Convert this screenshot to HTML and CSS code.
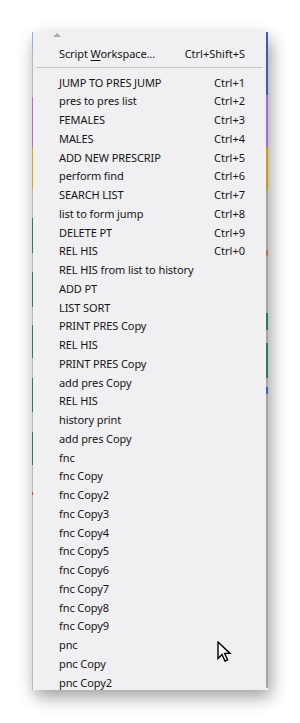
FILE: index.html
```html
<!DOCTYPE html>
<html>
<head>
<meta charset="utf-8">
<link rel="stylesheet" href="styles.css">
</head>
<body>
<div class="stage">
  <div class="menu">
    <div class="edge edge-left"></div>
    <div class="body">
      <div class="scroll-up"><span class="tri"></span></div>
      <div class="item"><span class="label">Script <u>W</u>orkspace...</span><span class="key">Ctrl+Shift+S</span></div>
      <div class="sep"></div>
      <div class="item"><span class="label">JUMP TO PRES JUMP</span><span class="key">Ctrl+1</span></div>
      <div class="item"><span class="label">pres to pres list</span><span class="key">Ctrl+2</span></div>
      <div class="item"><span class="label">FEMALES</span><span class="key">Ctrl+3</span></div>
      <div class="item"><span class="label">MALES</span><span class="key">Ctrl+4</span></div>
      <div class="item"><span class="label">ADD NEW PRESCRIP</span><span class="key">Ctrl+5</span></div>
      <div class="item"><span class="label">perform find</span><span class="key">Ctrl+6</span></div>
      <div class="item"><span class="label">SEARCH LIST</span><span class="key">Ctrl+7</span></div>
      <div class="item"><span class="label">list to form jump</span><span class="key">Ctrl+8</span></div>
      <div class="item"><span class="label">DELETE PT</span><span class="key">Ctrl+9</span></div>
      <div class="item"><span class="label">REL HIS</span><span class="key">Ctrl+0</span></div>
      <div class="item"><span class="label">REL HIS from list to history</span></div>
      <div class="item"><span class="label">ADD PT</span></div>
      <div class="item"><span class="label">LIST SORT</span></div>
      <div class="item"><span class="label">PRINT PRES Copy</span></div>
      <div class="item"><span class="label">REL HIS</span></div>
      <div class="item"><span class="label">PRINT PRES Copy</span></div>
      <div class="item"><span class="label">add pres Copy</span></div>
      <div class="item"><span class="label">REL HIS</span></div>
      <div class="item"><span class="label">history print</span></div>
      <div class="item"><span class="label">add pres Copy</span></div>
      <div class="item"><span class="label">fnc</span></div>
      <div class="item"><span class="label">fnc Copy</span></div>
      <div class="item"><span class="label">fnc Copy2</span></div>
      <div class="item"><span class="label">fnc Copy3</span></div>
      <div class="item"><span class="label">fnc Copy4</span></div>
      <div class="item"><span class="label">fnc Copy5</span></div>
      <div class="item"><span class="label">fnc Copy6</span></div>
      <div class="item"><span class="label">fnc Copy7</span></div>
      <div class="item"><span class="label">fnc Copy8</span></div>
      <div class="item"><span class="label">fnc Copy9</span></div>
      <div class="item"><span class="label">pnc</span></div>
      <div class="item"><span class="label">pnc Copy</span></div>
      <div class="item"><span class="label">pnc Copy2</span></div>
    </div>
    <div class="edge edge-right"></div>
  </div>
  <svg class="cursor" width="15" height="22" viewBox="0 0 15 22">
    <path d="M1 1 L1 17.5 L5 13.5 L8 20 L10.6 18.8 L7.6 12.4 L13 12.4 Z" fill="#fff" stroke="#000" stroke-width="1.4" stroke-linejoin="miter"/>
  </svg>
</div>
</body>
</html>
```

FILE: styles.css
```css
html, body {
  margin: 0;
  padding: 0;
  background: #ffffff;
}

.stage {
  position: relative;
  width: 300px;
  height: 723px;
  padding: 32px 0 0 32px;
  box-sizing: border-box;
}

.menu {
  display: flex;
  width: 236px;
  height: 658px;
  background: #f0eff1;
  box-shadow: 3px 7px 16px rgba(0, 0, 0, 0.38);
  overflow: hidden;
  font-family: "Noto Sans", "Open Sans", sans-serif;
  font-size: 11px;
  color: #151515;
}

.edge-left {
  width: 1px;
  flex: none;
  background: linear-gradient(to bottom,
    #8fb0d8 0, #8fb0d8 18px,
    #b9b9b9 18px, #b9b9b9 65px,
    #b46ad0 65px, #b46ad0 115px,
    #d9a613 115px, #d9a613 158px,
    #b9b9b9 158px, #b9b9b9 186px,
    #2d7a5a 186px, #2d7a5a 221px,
    #b9b9b9 221px, #b9b9b9 240px,
    #2d7a5a 240px, #2d7a5a 275px,
    #b9b9b9 275px, #b9b9b9 293px,
    #2d7a5a 293px, #2d7a5a 326px,
    #b9b9b9 326px, #b9b9b9 346px,
    #2d7a5a 346px, #2d7a5a 380px,
    #b9b9b9 380px, #b9b9b9 400px,
    #2d7a5a 400px, #2d7a5a 433px,
    #b9b9b9 433px, #b9b9b9 460px,
    #d94040 460px, #d94040 463px,
    #b9b9b9 463px, #b9b9b9 100%);
}

.edge-right {
  width: 2px;
  flex: none;
  margin-left: 1px;
  margin-bottom: 2px;
  background: linear-gradient(to bottom,
    #3c5ea8 0, #3c5ea8 63px,
    #a86ad0 63px, #a86ad0 115px,
    #c79a14 115px, #c79a14 158px,
    #a6a6a6 158px, #a6a6a6 218px,
    #b4784a 218px, #b4784a 224px,
    #a6a6a6 224px, #a6a6a6 281px,
    #2d7a5a 281px, #2d7a5a 298px,
    #a6a6a6 298px, #a6a6a6 311px,
    #2d7a5a 311px, #2d7a5a 346px,
    #a6a6a6 346px, #a6a6a6 355px,
    #3a66b0 355px, #3a66b0 362px,
    #a6a6a6 362px, #a6a6a6 100%);
}

.body {
  flex: 1;
  display: flex;
  flex-direction: column;
  min-width: 0;
}

.scroll-up {
  height: 12.5px;
  flex: none;
  position: relative;
}

.tri {
  position: absolute;
  left: 20px;
  top: 1px;
  width: 0;
  height: 0;
  border-left: 4px solid transparent;
  border-right: 4px solid transparent;
  border-bottom: 4px solid #a9a9ab;
}

.item {
  height: 18.75px;
  flex: none;
  display: flex;
  align-items: center;
  justify-content: space-between;
  padding: 0 20px 0 26px;
  white-space: nowrap;
}

.label {
  letter-spacing: -0.1px;
}

.item u {
  text-decoration-thickness: 1px;
  text-underline-offset: 2px;
}

.sep {
  height: 9.5px;
  flex: none;
  position: relative;
}

.sep::after {
  content: "";
  position: absolute;
  left: 3px;
  right: 2px;
  top: 4px;
  height: 1px;
  background: #c6c6c8;
}

.cursor {
  position: absolute;
  left: 217px;
  top: 641px;
}
```
